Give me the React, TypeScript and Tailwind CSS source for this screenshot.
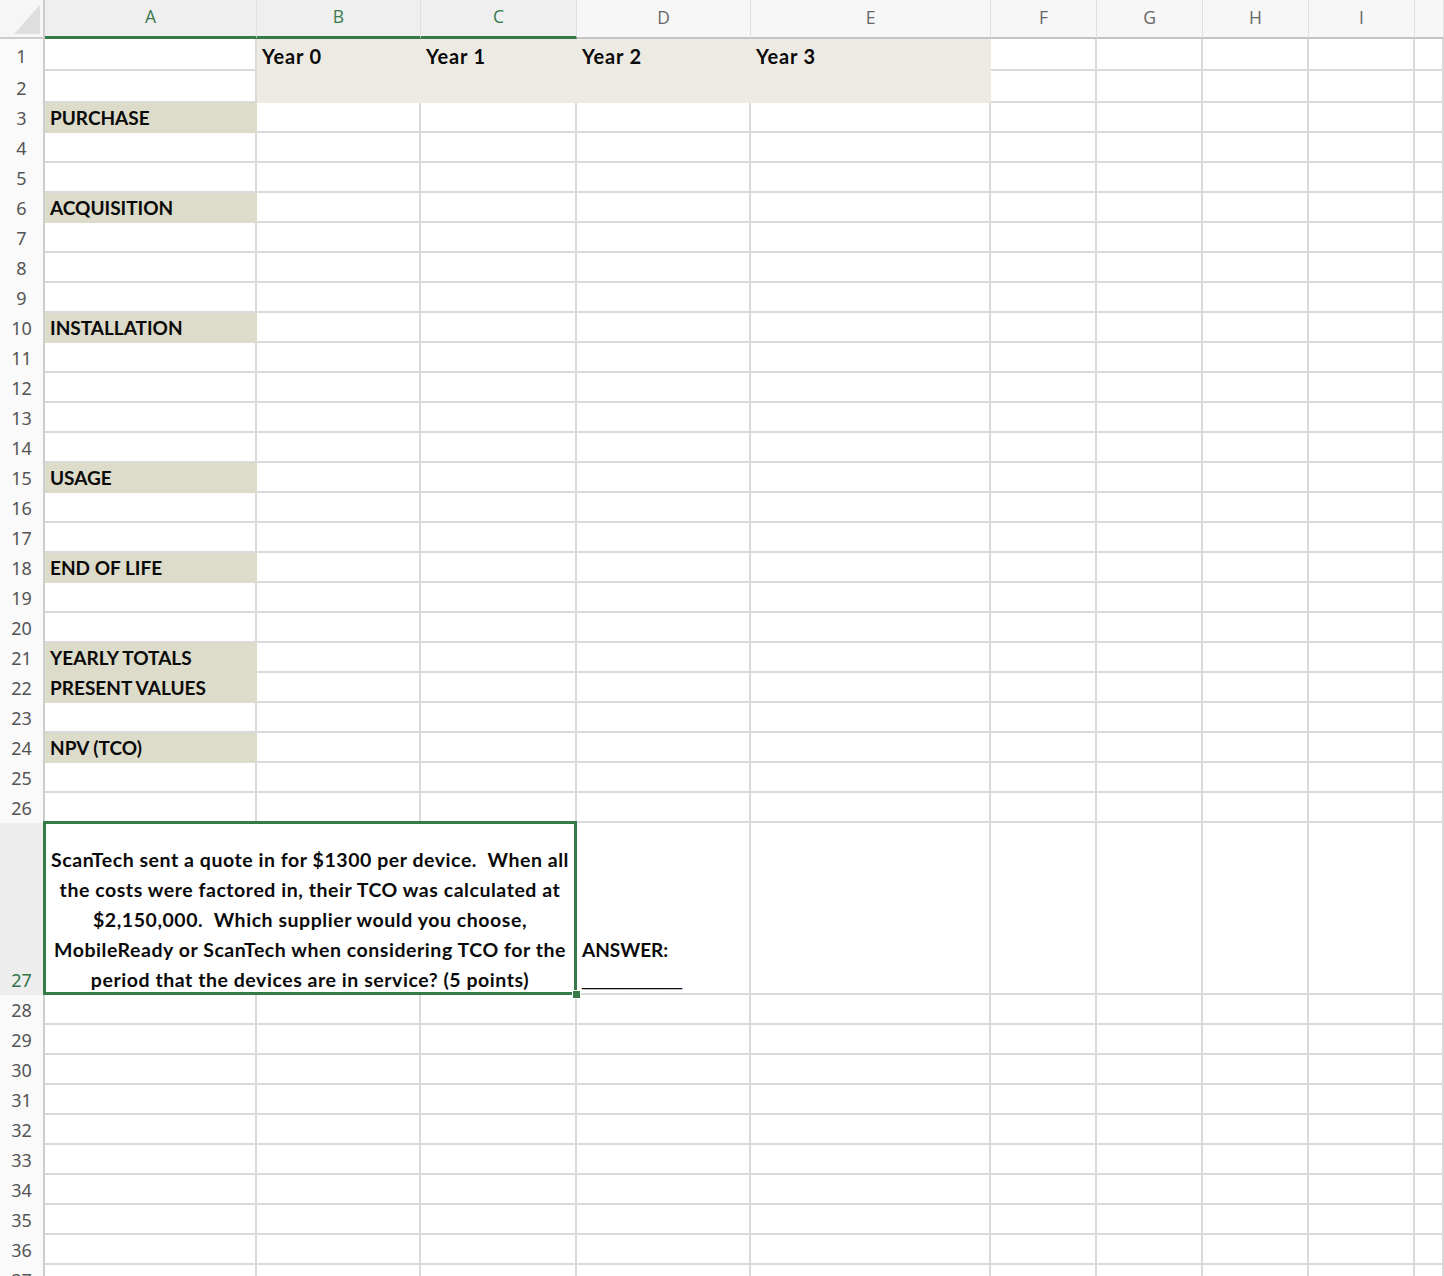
import React from "react";

type Col = { k: string; w: string; hdr: string };

const COLS: Col[] = [
  { k: "A", w: "w-[212px]", hdr: "sel" },
  { k: "B", w: "w-[164px]", hdr: "sel" },
  { k: "C", w: "w-[156px]", hdr: "sel" },
  { k: "D", w: "w-[174px]", hdr: "" },
  { k: "E", w: "w-[240px]", hdr: "" },
  { k: "F", w: "w-[106px]", hdr: "" },
  { k: "G", w: "w-[106px]", hdr: "" },
  { k: "H", w: "w-[106px]", hdr: "" },
  { k: "I", w: "w-[106px]", hdr: "" },
  { k: "J", w: "flex-1", hdr: "" },
];

const LABELS: Record<number, string> = {
  3: "PURCHASE",
  6: "ACQUISITION",
  10: "INSTALLATION",
  15: "USAGE",
  18: "END OF LIFE",
  21: "YEARLY TOTALS",
  22: "PRESENT VALUES",
  24: "NPV (TCO)",
};

const YEARS: Record<string, string> = { B: "Year 0", C: "Year 1", D: "Year 2", E: "Year 3" };

const cellFont = { fontFamily: "Lato, 'Liberation Sans', sans-serif" };
const hdrFont = { fontFamily: "'Noto Sans', 'Open Sans', sans-serif" };
const letterFont = { fontFamily: "'Open Sans', 'Noto Sans', sans-serif" };

function rowHeight(r: number) {
  if (r === 1 || r === 2) return "h-[32px]";
  if (r === 27) return "h-[172px]";
  return "h-[30px]";
}

function RowHeader({ r }: { r: number }) {
  const sel = r === 27;
  return (
    <div
      className={`w-[45px] shrink-0 border-r-2 border-[#cdcdcd] flex items-end justify-center pb-[5px] text-[18px] leading-[20px] ${
        sel ? "bg-[#ededed] text-[#2f7446]" : "bg-[#fafafa] text-[#555555]"
      }`}
      style={hdrFont}
    >
      {r}
    </div>
  );
}

function NormalRow({ r }: { r: number }) {
  return (
    <div className={`flex ${rowHeight(r)}`}>
      <RowHeader r={r} />
      {COLS.map((c) => {
        const band = (r === 1 || r === 2) && ["B", "C", "D", "E"].includes(c.k);
        const fill = !!LABELS[r] && c.k === "A";
        let color = "border-[#dadada]";
        if (band) color = "bg-[#edeae3] border-[#edeae3]";
        if (fill) color = "bg-[#dddbc9] border-[#dddbc9]";
        let text: React.ReactNode = "";
        if (fill) text = <span className="text-[19px]">{LABELS[r]}</span>;
        if (r === 1 && YEARS[c.k])
          text = <span className="text-[20px] tracking-[0.8px]">{YEARS[c.k]}</span>;
        return (
          <div
            key={c.k}
            className={`${c.w} shrink-0 border-r-2 border-b-2 ${color} flex items-end pl-[5px] pb-0 whitespace-nowrap leading-[26px] font-bold text-[#0a0a0a]`}
            style={cellFont}
          >
            {text}
          </div>
        );
      })}
    </div>
  );
}

function Row27() {
  const lines = [
    "ScanTech sent a quote in for $1300 per device.  When all",
    "the costs were factored in, their TCO was calculated at",
    "$2,150,000.  Which supplier would you choose,",
    "MobileReady or ScanTech when considering TCO for the",
    "period that the devices are in service? (5 points)",
  ];
  return (
    <div className="flex h-[172px]">
      <RowHeader r={27} />
      <div
        className="w-[532px] shrink-0 relative border-r-2 border-b-2 border-[#dadada] flex flex-col items-center justify-end pb-0 text-[19.5px] tracking-[0.55px] leading-[30px] font-bold text-[#0a0a0a]"
        style={cellFont}
      >
        {lines.map((l, i) => (
          <div key={i} className="whitespace-pre text-center translate-y-[2px]">
            {l}
          </div>
        ))}
        <div className="absolute -left-[2px] -top-[2px] -right-[2px] -bottom-[2px] border-[3px] border-[#367a4a] z-10 pointer-events-none" />
        <div className="absolute -right-[6px] -bottom-[6px] w-[9px] h-[9px] bg-[#367a4a] border border-white z-20" />
      </div>
      {COLS.slice(3).map((c) => (
        <div
          key={c.k}
          className={`${c.w} shrink-0 border-r-2 border-b-2 border-[#dadada] flex flex-col justify-end pl-[5px] text-[19px] leading-[30px] font-bold text-[#0a0a0a] whitespace-nowrap`}
          style={cellFont}
        >
          {c.k === "D" ? (
            <>
              <div className="translate-y-[2px]">ANSWER:</div>
              <div
                className="text-[18px] leading-[30px] font-normal translate-y-[1px]"
                style={{ fontFamily: "'Liberation Sans', Arial, sans-serif" }}
              >
                __________
              </div>
            </>
          ) : null}
        </div>
      ))}
    </div>
  );
}

export default function App() {
  const rows: number[] = [];
  for (let i = 1; i <= 37; i++) rows.push(i);
  return (
    <div className="w-[1444px] h-[1276px] overflow-hidden bg-white">
      {/* column header */}
      <div className="flex h-[39px]">
        <div className="w-[45px] shrink-0 bg-[#f6f6f6] border-r-2 border-b-2 border-[#cdcdcd] relative">
          <svg width="43" height="37" className="absolute left-0 top-0">
            <polygon points="14,34 40,34 40,5" fill="#dedede" />
          </svg>
        </div>
        {COLS.map((c) => {
          const sel = c.hdr === "sel";
          return (
            <div
              key={c.k}
              className={`${c.w} shrink-0 flex items-center justify-center pb-[3px] text-[17.5px] border-r ${
                sel
                  ? "bg-[#efefef] border-b-[3px] border-b-[#367a4a] border-r-[#e0e0e0] text-[#3a7a4d]"
                  : "bg-[#f7f7f7] border-b-2 border-b-[#c4c4c4] border-r-[#e0e0e0] text-[#666666]"
              }`}
              style={letterFont}
            >
              {c.k === "J" ? "" : c.k}
            </div>
          );
        })}
      </div>
      {rows.map((r) => (r === 27 ? <Row27 key={r} /> : <NormalRow key={r} r={r} />))}
    </div>
  );
}
